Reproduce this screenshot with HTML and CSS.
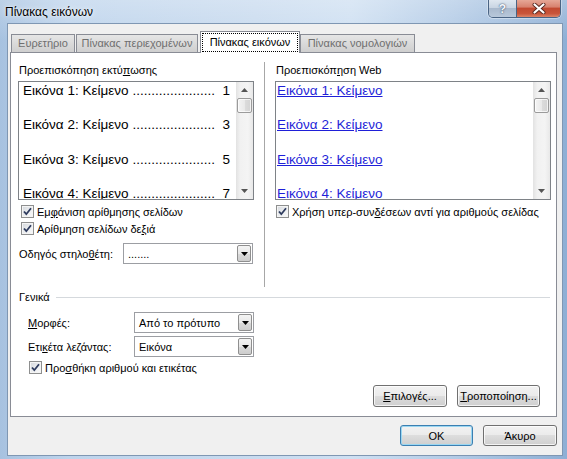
FILE: index.html
```html
<!DOCTYPE html>
<html lang="el">
<head>
<meta charset="utf-8">
<title>Πίνακας εικόνων</title>
<link rel="stylesheet" href="styles.css">
</head>
<body>
<div class="window">
  <div class="titlebar">
    <span class="title">Πίνακας εικόνων</span>
    <div class="caption-btns">
      <div class="cbtn help">?</div>
      <div class="cbtn close">
        <svg width="14" height="11" viewBox="0 0 14 11"><path d="M2.5 1.5 L11.5 9.5 M11.5 1.5 L2.5 9.5" stroke="#5a2a22" stroke-width="4" stroke-linecap="round"/><path d="M2.5 1.5 L11.5 9.5 M11.5 1.5 L2.5 9.5" stroke="#ffffff" stroke-width="2.2" stroke-linecap="round"/></svg>
      </div>
    </div>
  </div>
  <div class="client">
    <div class="tabs">
      <div class="tab t1">Ευρετήριο</div>
      <div class="tab t2">Πίνακας περιεχομένων</div>
      <div class="tab active"><span class="focus">Πίνακας εικόνων</span></div>
      <div class="tab t4">Πίνακας νομολογιών</div>
    </div>
    <div class="panel">
      <div class="previews">
        <div class="col col-left">
          <div class="label">Προεπισκόπηση εκτύ<u>π</u>ωσης</div>
          <div class="preview">
            <div class="preview-content">
              <div class="entry"><span>Εικόνα 1: Κείμενο</span><span class="leader">......................</span><span class="num">1</span></div>
              <div class="entry"><span>Εικόνα 2: Κείμενο</span><span class="leader">......................</span><span class="num">3</span></div>
              <div class="entry"><span>Εικόνα 3: Κείμενο</span><span class="leader">......................</span><span class="num">5</span></div>
              <div class="entry"><span>Εικόνα 4: Κείμενο</span><span class="leader">......................</span><span class="num">7</span></div>
            </div>
            <div class="sb">
              <div class="sb-btn"><svg width="7" height="4" viewBox="0 0 7 4"><path d="M0 4 L3.5 0 L7 4 Z" fill="#555"/></svg></div>
              <div class="sb-thumb"></div>
              <div class="sb-track"></div>
              <div class="sb-btn"><svg width="7" height="4" viewBox="0 0 7 4"><path d="M0 0 L3.5 4 L7 0 Z" fill="#555"/></svg></div>
            </div>
          </div>
          <div class="check first">
            <span class="cb"><svg width="9" height="9" viewBox="0 0 9 9"><path d="M1 4.5 L3.3 7.2 L8 1.2" fill="none" stroke="#2e3b5e" stroke-width="1.8"/></svg></span>
            <span>Εμ<u>φ</u>άνιση αρίθμησης σελίδων</span>
          </div>
          <div class="check">
            <span class="cb"><svg width="9" height="9" viewBox="0 0 9 9"><path d="M1 4.5 L3.3 7.2 L8 1.2" fill="none" stroke="#2e3b5e" stroke-width="1.8"/></svg></span>
            <span>Αρίθμηση σελίδων δε<u>ξ</u>ιά</span>
          </div>
          <div class="field-row">
            <span class="field-label">Οδηγός στηλο<u>θ</u>έτη:</span>
            <div class="combo w130">
              <span class="combo-text">.......</span>
              <span class="combo-btn"><svg width="7" height="4" viewBox="0 0 7 4"><path d="M0 0 L3.5 4 L7 0 Z" fill="#000"/></svg></span>
            </div>
          </div>
        </div>
        <div class="vsep"></div>
        <div class="col col-right">
          <div class="label">Προεπισκόπ<u>η</u>ση Web</div>
          <div class="preview">
            <div class="preview-content web">
              <a class="link">Εικόνα 1: Κείμενο</a>
              <a class="link">Εικόνα 2: Κείμενο</a>
              <a class="link">Εικόνα 3: Κείμενο</a>
              <a class="link">Εικόνα 4: Κείμενο</a>
            </div>
            <div class="sb">
              <div class="sb-btn"><svg width="7" height="4" viewBox="0 0 7 4"><path d="M0 4 L3.5 0 L7 4 Z" fill="#555"/></svg></div>
              <div class="sb-thumb"></div>
              <div class="sb-track"></div>
              <div class="sb-btn"><svg width="7" height="4" viewBox="0 0 7 4"><path d="M0 0 L3.5 4 L7 0 Z" fill="#555"/></svg></div>
            </div>
          </div>
          <div class="check first right">
            <span class="cb"><svg width="9" height="9" viewBox="0 0 9 9"><path d="M1 4.5 L3.3 7.2 L8 1.2" fill="none" stroke="#2e3b5e" stroke-width="1.8"/></svg></span>
            <span>Χρήση υπερ-συν<u>δ</u>έσεων αντί για αριθμούς σελίδας</span>
          </div>
        </div>
      </div>
      <div class="group-title"><span>Γενικά</span><span class="group-line"></span></div>
      <div class="general">
        <div class="gen-row">
          <span class="gen-label"><u>Μ</u>ορφές:</span>
          <div class="combo w120">
            <span class="combo-text">Από το πρότυπο</span>
            <span class="combo-btn"><svg width="7" height="4" viewBox="0 0 7 4"><path d="M0 0 L3.5 4 L7 0 Z" fill="#000"/></svg></span>
          </div>
        </div>
        <div class="gen-row second">
          <span class="gen-label">Ετι<u>κ</u>έτα λεζάντας:</span>
          <div class="combo w120">
            <span class="combo-text">Εικόνα</span>
            <span class="combo-btn"><svg width="7" height="4" viewBox="0 0 7 4"><path d="M0 0 L3.5 4 L7 0 Z" fill="#000"/></svg></span>
          </div>
        </div>
        <div class="check gen-check">
          <span class="cb"><svg width="9" height="9" viewBox="0 0 9 9"><path d="M1 4.5 L3.3 7.2 L8 1.2" fill="none" stroke="#2e3b5e" stroke-width="1.8"/></svg></span>
          <span>Προ<u>σ</u>θήκη αριθμού και ετικέτας</span>
        </div>
      </div>
      <div class="panel-buttons">
        <div class="btn w74"><u>Ε</u>πιλογές...</div>
        <div class="btn w83"><u>Τ</u>ροποποίηση...</div>
      </div>
    </div>
    <div class="dialog-buttons">
      <div class="btn default w73">OK</div>
      <div class="btn w74">Άκυρο</div>
    </div>
  </div>
</div>
</body>
</html>
```

FILE: styles.css
```css
* { box-sizing: border-box; }
html, body { margin: 0; padding: 0; }
body {
  width: 567px;
  height: 459px;
  overflow: hidden;
  font-family: "Liberation Sans", Arial, sans-serif;
  font-size: 11px;
  color: #000;
}
u { text-decoration: underline; text-underline-offset: 1px; }

.window {
  width: 567px;
  height: 459px;
  display: flex;
  flex-direction: column;
  background:
    linear-gradient(180deg, rgba(255,255,255,0.25), rgba(255,255,255,0) 40px),
    linear-gradient(90deg, #a7c2e0 0%, #bed4ec 12%, #c9dbef 45%, #cfe0f2 62%, #b3cbe6 80%, #8eafd5 100%);
}

/* title bar */
.titlebar {
  height: 23px;
  display: flex;
  align-items: flex-start;
  flex-shrink: 0;
}
.title {
  padding-left: 5px;
  line-height: 24px;
  font-size: 12px;
  color: #000;
  text-shadow: 0 0 6px rgba(255,255,255,0.9), 0 0 2px rgba(255,255,255,0.8);
}
.caption-btns {
  margin-left: auto;
  margin-right: 6px;
  display: flex;
  height: 18px;
  border: 1px solid #4a6484;
  border-top: none;
  border-radius: 0 0 5px 5px;
  overflow: hidden;
  box-shadow: 0 0 0 1px rgba(255,255,255,0.35);
}
.cbtn {
  height: 17px;
  display: flex;
  align-items: center;
  justify-content: center;
}
.help {
  width: 28px;
  border-right: 1px solid #4a6484;
  background: linear-gradient(180deg, #dfe7f0 0%, #c9d5e3 45%, #a9b9cd 50%, #b8c8da 100%);
  color: #f4f7fb;
  font-weight: bold;
  font-size: 12px;
  text-shadow: 0 0 2px #4b5e78, 0 0 1px #4b5e78;
}
.close {
  width: 43px;
  background: linear-gradient(180deg, #e6a796 0%, #d88370 40%, #c24a31 50%, #c9553a 80%, #dc8568 100%);
}

/* client area */
.client {
  flex: 1;
  margin: 0 4px 3px 7px;
  border: 1px solid #7f97b3;
  background: #f0f0f0;
  padding: 8px 5px 0 1px;
  display: flex;
  flex-direction: column;
}

/* tabs */
.tabs {
  display: flex;
  align-items: flex-end;
  height: 20px;
  padding-left: 2px;
  position: relative;
  z-index: 1;
}
.tab {
  height: 18px;
  border: 1px solid #898c95;
  border-bottom: none;
  background: linear-gradient(180deg, #e6e6e6 0%, #dadada 50%, #cfcfcf 100%);
  color: #6f6f6f;
  line-height: 17px;
  text-align: center;
  white-space: nowrap;
}
.t1 { width: 64px; }
.t2 { width: 122px; margin-left: 1px; }
.t4 { width: 115px; }
.tab.active {
  width: 100px;
  height: 22px;
  margin-left: 2px;
  margin-bottom: -1px;
  background: #fff;
  color: #000;
  padding: 1px 1px 0 1px;
}
.focus {
  display: block;
  height: 19px;
  border: 1px dotted #000;
  line-height: 17px;
}

/* main panel */
.panel {
  margin-left: 1px;
  height: 365px;
  background: #fff;
  border: 1px solid #898c95;
  padding: 9px 6px 9px 7px;
  display: flex;
  flex-direction: column;
}
.previews {
  display: grid;
  grid-template-columns: 236px 1px 276px;
  column-gap: 10px;
  height: 225px;
}
.col { padding-top: 1px; display: flex; flex-direction: column; }
.vsep { background: #a7a7a7; }
.label {
  line-height: 14px;
  height: 14px;
  margin-bottom: 4px;
  padding-left: 1px;
}
.preview {
  height: 119px;
  border: 1px solid #7e8287;
  display: flex;
  background: #fff;
}
.preview-content {
  flex: 1;
  overflow: hidden;
  font-size: 13.5px;
  padding: 0 6px 0 4px;
}
.entry {
  display: flex;
  line-height: 17px;
  height: 17px;
  margin-bottom: 17.3px;
  white-space: nowrap;
}
.leader {
  margin-left: 4px;
}
.num { margin-left: auto; }
.preview-content.web { padding-left: 1px; }
.link {
  display: block;
  line-height: 17px;
  height: 17px;
  margin-bottom: 17.3px;
  color: #1f1fd8;
  text-decoration: underline;
  text-underline-offset: 1px;
  white-space: nowrap;
}

/* scrollbar */
.sb {
  width: 17px;
  display: flex;
  flex-direction: column;
  background: linear-gradient(90deg, #e2e2e2 0%, #f1f1f1 25%, #f4f4f4 70%, #e8e8e8 100%);
}
.sb-btn {
  height: 16px;
  display: flex;
  align-items: center;
  justify-content: center;
}
.sb-thumb {
  height: 15px;
  margin: 0 1px;
  border: 1px solid #9b9b9b;
  border-radius: 2px;
  background: linear-gradient(90deg, #f4f4f4 0%, #e9e9e9 50%, #dcdcdc 51%, #d3d3d3 100%);
  box-shadow: inset 0 0 0 1px rgba(255,255,255,0.7);
}
.sb-track { flex: 1; }

/* checkboxes */
.check {
  display: flex;
  align-items: center;
  height: 17px;
  gap: 3px;
  padding-left: 3px;
  white-space: nowrap;
}
.check.first { margin-top: 3px; }
.check.right { padding-left: 1px; }
.cb {
  width: 13px;
  height: 13px;
  border: 1px solid #8e8f8f;
  background: linear-gradient(135deg, #d4d7dc 0%, #eceef0 55%, #fafafa 100%);
  box-shadow: inset 0 0 0 1px #f4f4f4;
  display: flex;
  align-items: center;
  justify-content: center;
  flex-shrink: 0;
}

/* combos */
.field-row {
  display: flex;
  align-items: center;
  margin-top: 6px;
  height: 21px;
}
.field-label { width: 105px; padding-left: 1px; }
.combo {
  height: 21px;
  border: 1px solid #9c9ea3;
  background: #fff;
  display: flex;
  align-items: center;
  padding: 1px;
}
.w130 { width: 130px; }
.w120 { width: 120px; }
.combo-text { flex: 1; padding-left: 3px; white-space: nowrap; }
.combo-btn {
  width: 14px;
  height: 17px;
  border: 1px solid #8f8f8f;
  border-radius: 2px;
  background: linear-gradient(180deg, #f4f4f4 0%, #e8e8e8 50%, #dadada 51%, #cdcdcd 100%);
  display: flex;
  align-items: center;
  justify-content: center;
}

/* group */
.group-title {
  display: flex;
  align-items: center;
  gap: 6px;
  margin-top: 3px;
  height: 14px;
  line-height: 14px;
  padding-left: 1px;
}
.group-line { flex: 1; height: 1px; background: #d5d9dd; }
.general { padding-left: 10px; }
.gen-row {
  display: flex;
  align-items: center;
  height: 21px;
  margin-top: 8px;
}
.gen-row.second { margin-top: 3px; }
.gen-label { width: 106px; }
.gen-check { margin-top: 2px; padding-left: 1px; }

/* buttons */
.panel-buttons {
  display: flex;
  justify-content: flex-end;
  gap: 10px;
  margin-top: 9px;
  padding-right: 10px;
}
.btn {
  height: 22px;
  border: 1px solid #707070;
  border-radius: 3px;
  background: linear-gradient(180deg, #f2f2f2 0%, #ebebeb 48%, #dddddd 50%, #cfcfcf 100%);
  box-shadow: inset 0 0 0 1px rgba(255,255,255,0.75);
  display: flex;
  align-items: center;
  justify-content: center;
  white-space: nowrap;
}
.w73 { width: 73px; }
.w74 { width: 74px; }
.w83 { width: 83px; }
.dialog-buttons {
  display: flex;
  justify-content: flex-end;
  gap: 10px;
  margin-top: 8px;
}
.dialog-buttons .btn { height: 21px; }
.btn.default {
  border-color: #3c7fb1;
  box-shadow: inset 0 0 0 1px #9ad7f2;
}
```
